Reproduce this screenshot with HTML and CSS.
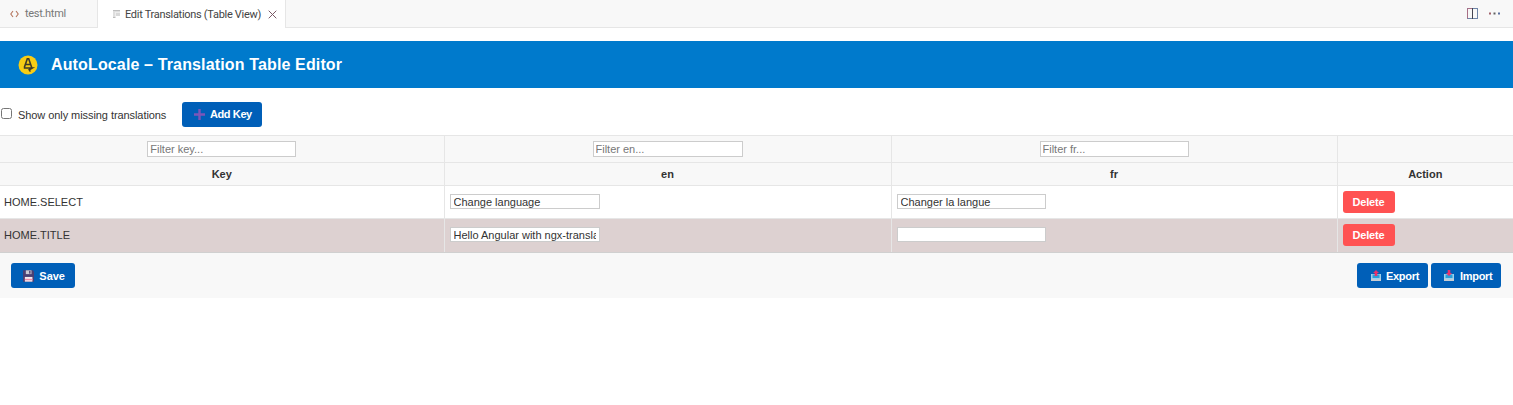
FILE: index.html
```html
<!DOCTYPE html>
<html lang="en">
<head>
<meta charset="utf-8">
<title>AutoLocale</title>
<link rel="stylesheet" href="styles.css">
</head>
<body>
<div class="tabbar">
  <div class="tab">
    <svg class="tab-icon" width="9" height="8" viewBox="0 0 9 8"><path d="M3 1 .8 4 3 7M6 1l2.200 3L6 7" fill="none" stroke="#b5765e" stroke-width="1.100"/></svg>
    <span>test.html</span>
  </div>
  <div class="tab tab-active">
    <svg class="tab-icon" width="7" height="8" viewBox="0 0 7 8"><path d="M0 0h7v1.500H0zM0 2.500h2.500v1H0zM0 4.500h2.500v1H0zM0 6.500h2.500V8H0z" fill="#bdbdbd"/><path d="M3 2.500h4V6H3z" fill="#d8d8d8"/></svg>
    <span>Edit Translations (Table View)</span>
    <svg class="tab-close" width="9" height="9" viewBox="0 0 9 9"><path d="M.7.7l7.600 7.600M8.300.7.7 8.300" fill="none" stroke="#7a5a66" stroke-width="1"/></svg>
  </div>
  <div class="tab-actions">
    <svg width="11" height="11" viewBox="0 0 11 11"><rect x=".5" y=".5" width="10" height="10" fill="none" stroke="#6f86a8"/><path d="M.5 10.500V.5H5.500" fill="none" stroke="#a86f86"/><path d="M5.500 0v11" stroke="#444450"/></svg>
    <svg width="11" height="3" viewBox="0 0 11 3"><rect width="2" height="2" y=".5" fill="#a0606a"/><rect x="4.500" width="2" height="2" y=".5" fill="#606060"/><rect x="9" width="2" height="2" y=".5" fill="#5a70a0"/></svg>
  </div>
</div>
<header class="banner">
  <svg class="logo" width="20" height="20" viewBox="0 0 20 20"><circle cx="10" cy="10" r="9.500" fill="#f7cd14"/><path d="M6.300 12.500 9.300 3.800h1.400l3 8.700M7.400 9.500h5.200M5.800 13h8.400l-3 1.700 1.300 1.800" fill="none" stroke="#3d3a2a" stroke-width="1.600"/></svg>
  <h1>AutoLocale – Translation Table Editor</h1>
</header>
<div class="toolbar">
  <label class="check"><input type="checkbox"><span>Show only missing translations</span></label>
  <button class="btn btn-add" type="button">
    <svg width="11" height="11" viewBox="0 0 11 11"><path d="M4.300 0h2.400v4.300H11v2.400H6.700V11H4.300V6.700H0V4.300h4.300z" fill="#7d55b8"/></svg>
    <span>Add Key</span>
  </button>
</div>
<table class="grid">
  <colgroup><col class="c-key"><col class="c-en"><col class="c-fr"><col></colgroup>
  <thead>
    <tr class="filters">
      <th><input class="filter" placeholder="Filter key..."></th>
      <th><input class="filter" placeholder="Filter en..."></th>
      <th><input class="filter" placeholder="Filter fr..."></th>
      <th></th>
    </tr>
    <tr class="heads">
      <th>Key</th><th>en</th><th>fr</th><th>Action</th>
    </tr>
  </thead>
  <tbody>
    <tr>
      <td>HOME.SELECT</td>
      <td><input class="cell" value="Change language"></td>
      <td><input class="cell" value="Changer la langue"></td>
      <td><button class="btn-del" type="button">Delete</button></td>
    </tr>
    <tr class="missing">
      <td>HOME.TITLE</td>
      <td><input class="cell" value="Hello Angular with ngx-translate"></td>
      <td><input class="cell" value=""></td>
      <td><button class="btn-del" type="button">Delete</button></td>
    </tr>
  </tbody>
</table>
<footer class="footer">
  <button class="btn btn-save" type="button">
    <svg width="12" height="12" viewBox="0 0 12 12"><path d="M0 0h10.500L12 1.500V12H0z" fill="#4a3f73"/><rect x="2" y="7" width="8" height="5" fill="#f3e9ef"/><rect x="2" y="9" width="8" height="1.500" fill="#f08ca6"/><rect x="3" y="0" width="6" height="4" fill="#c9c9d4"/><rect x="6.500" y=".5" width="1.500" height="3" fill="#4a3f73"/></svg>
    <span>Save</span>
  </button>
  <div class="footer-right">
    <button class="btn btn-io" type="button">
      <svg width="10" height="11" viewBox="0 0 10 11"><path d="M0 4h10v7H0z" fill="#9fd0ea"/><path d="M0 8.500 5 10l5-1.500V11H0z" fill="#c9ccd2"/><path d="M1.500 4.500h7V8h-7z" fill="#2a9fdb"/><path d="M5 0l3 3H6.300v3H3.700V3H2z" fill="#e8316b"/></svg>
      <span>Export</span>
    </button>
    <button class="btn btn-io btn-import" type="button">
      <svg width="10" height="11" viewBox="0 0 10 11"><path d="M0 4h10v7H0z" fill="#9fd0ea"/><path d="M0 8.500 5 10l5-1.500V11H0z" fill="#c9ccd2"/><path d="M1.500 4.500h7V8h-7z" fill="#2a9fdb"/><path d="M5 6 2 3h1.700V0h2.600v3H8z" fill="#e8316b"/></svg>
      <span>Import</span>
    </button>
  </div>
</footer>
</body>
</html>
```
FILE: styles.css
```css
* { box-sizing: border-box; }
html, body { margin: 0; padding: 0; background: #fff; }
body { font-family: "Liberation Sans", Arial, sans-serif; font-size: 12px; color: #333; overflow: hidden; }

.tabbar { display: flex; height: 28px; background: #f8f8f8; border-bottom: 1px solid #e6e6e6; font-family: Roboto, sans-serif; font-size: 11px; letter-spacing: -.3px; color: #777; white-space: nowrap; }
.tab { display: flex; align-items: center; gap: 6px; width: 98px; padding-left: 10px; border-right: 1px solid #e6e6e6; }
.tab-active { width: 188px; height: 28px; padding-left: 15px; background: #fff; color: #444; border-right: 1px solid #e6e6e6; }
.tab-active .tab-icon { margin-right: -1px; }
.tab-close { margin-left: 1px; }
.tab-actions { margin-left: auto; display: flex; align-items: center; gap: 11px; padding-right: 13px; }

.banner { display: flex; align-items: center; gap: 13px; height: 47px; margin-top: 13px; padding-left: 18px; background: #007acc; color: #fff; }
.banner h1 { margin: 0; font-size: 16px; font-weight: 700; letter-spacing: .14px; }
.logo { flex: none; }

.toolbar { display: flex; align-items: center; height: 47px; padding-top: 5px; }
.check { display: flex; align-items: center; width: 182px; margin-top: 1px; font-size: 11px; letter-spacing: -.07px; white-space: nowrap; }
.check input { width: 11px; height: 11px; margin: 0 6px 2px 1px; }
.btn { display: inline-flex; align-items: center; gap: 5px; height: 25px; padding: 0 10px 0 12px; border: 0; border-radius: 3px; background: #005fb8; color: #fff; font: 700 11px "Liberation Sans", Arial, sans-serif; white-space: nowrap; }
.btn-add { width: 80px; letter-spacing: -.4px; }

.grid { width: 100%; table-layout: fixed; border-collapse: collapse; }
.c-key { width: 444px; }
.c-en { width: 447px; }
.c-fr { width: 446px; }
.grid th, .grid td { padding: 0; border: 1px solid #e6e6e6; }
.grid tr > :first-child { border-left: 0; }
.grid tr > :last-child { border-right: 0; }
.grid th { background: #f8f8f8; text-align: center; font-size: 11px; }
.filters { height: 27px; }
.filters th { font-weight: 400; }
.heads { height: 23px; }
.grid td { height: 33px; padding: 0 5px; font-size: 11px; }
.grid td:first-child { padding-left: 4px; }
.grid .missing td { height: 34px; padding-bottom: 2px; background: #ddd1d1; border-bottom-color: #d0d0d0; }

.filter { display: block; width: 149px; height: 16px; margin: 0 auto; padding: 0 2px; border: 1px solid #ccc; font: 11px "Liberation Sans", Arial, sans-serif; color: #333; background: #fff; }
.filter::placeholder { color: #777; opacity: 1; }
.cell { display: block; width: 149px; height: 15px; margin-bottom: 1px; padding: 0 3px; border: 1px solid #ccc; font: 11px "Liberation Sans", Arial, sans-serif; color: #333; background: #fff; }
.missing .cell { margin-bottom: 0; }
.grid tr > :nth-child(2) .filter, .grid tr > :nth-child(2) .cell { width: 150px; }
.btn-del { display: block; width: 52px; height: 22px; padding: 0; border: 0; border-radius: 3px; background: #ff5252; color: #fff; font: 700 11px "Liberation Sans", Arial, sans-serif; letter-spacing: -.15px; }

.footer { display: flex; justify-content: space-between; align-items: center; height: 45px; padding: 0 12px 0 11px; background: #f8f8f8; }
.footer-right { display: flex; gap: 3px; }
.btn-save { width: 64px; }
.btn-io { gap: 5px; width: 71px; padding: 0 0 0 14px; letter-spacing: -.3px; }
.btn-import { gap: 6px; width: 70px; padding-left: 13px; }
```
